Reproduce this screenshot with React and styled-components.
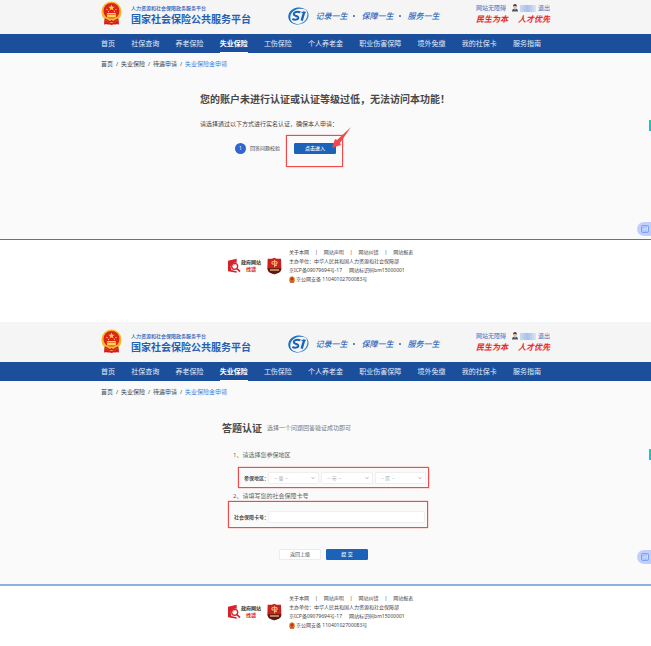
import React, { Fragment, useId } from 'react';
import styled, { createGlobalStyle } from 'styled-components';

const GlobalStyle = createGlobalStyle`
  * {
    box-sizing: border-box;
  }
  body {
    margin: 0;
    background: #fff;
    color: #444;
    font-family: 'Noto Sans', 'Noto Sans CJK SC', sans-serif;
    font-size: 6px;
    line-height: 8px;
  }
  h1, h2, p, ul, ol {
    margin: 0;
    padding: 0;
    list-style: none;
  }
  a {
    color: inherit;
    text-decoration: none;
  }
  button, input, select {
    font-family: inherit;
    margin: 0;
  }
  svg {
    display: block;
    flex: none;
  }
`;

const Screens = styled.div`
  display: flex;
  flex-direction: column;
  gap: 28px;
`;

const Screen = styled.section`
  position: relative;
  overflow: hidden;
`;

const Container = styled.div`
  width: 100%;
  max-width: ${props => props.$width || 449}px;
  margin: 0 auto;
`;

/* header */

const Header = styled.header`
  background: #f5f5f5;
  padding: ${props => (props.$cropped ? 0 : 6)}px 0 8px;
`;

const HeaderRow = styled(Container)`
  display: flex;
  justify-content: space-between;
  align-items: flex-end;
  height: 26px;
`;

const Brand = styled.a`
  display: flex;
  align-items: flex-end;
  gap: 9px;
  color: #2560b4;
`;

const BrandText = styled.div`
  white-space: nowrap;
`;

const BrandSub = styled.div`
  font-size: 5px;
  font-weight: 500;
  line-height: 8px;
`;

const BrandTitle = styled.div`
  font-size: 10px;
  font-weight: 700;
  line-height: 14px;
`;

const Slogan = styled.div`
  display: flex;
  align-items: center;
  gap: 5px;
  color: #2f65b5;
  font-size: 8px;
  font-style: italic;
  font-weight: 500;
  line-height: 20px;
  white-space: nowrap;
`;

const Dot = styled.i`
  width: 2px;
  height: 2px;
  margin: 0 1px;
  border-radius: 50%;
  background: #2f65b5;
`;

const Account = styled.div`
  color: #3a72c0;
  white-space: nowrap;
`;

const AccountRow = styled.div`
  display: flex;
  align-items: center;
  justify-content: space-between;
`;

const UserLinks = styled.div`
  display: flex;
  align-items: center;
  gap: 2px;
  margin-left: 6px;
`;

const MaskedName = styled.span`
  width: 16px;
  height: 7px;
  background: linear-gradient(90deg, #cbdaf1, #a9c1e8 45%, #bccfee 70%, #dbe5f5);
`;

const Motto = styled.div`
  display: flex;
  justify-content: space-between;
  color: #e5252b;
  font-size: 8px;
  font-style: italic;
  font-weight: 700;
  line-height: 14px;
`;

/* navigation */

const Nav = styled.nav`
  background: #1b4f9c;
`;

const NavList = styled.ul`
  display: flex;
  justify-content: space-between;
  padding-right: 9px;
  white-space: nowrap;
`;

const NavLink = styled.a`
  display: block;
  height: 19px;
  border-bottom: 1px solid ${props => (props.$active ? '#fff' : 'transparent')};
  color: ${props => (props.$active ? '#fff' : '#e3ecf8')};
  font-size: 7px;
  font-weight: ${props => (props.$active ? 700 : 400)};
  line-height: 19px;
`;

const Breadcrumb = styled.nav`
  display: flex;
  gap: 2px;
  padding-top: 7px;
`;

const Crumb = styled.a`
  color: ${props => (props.$current ? '#3f7fe0' : '#444')};
`;

const Slash = styled.span`
  width: 4px;
  text-align: center;
`;

/* body */

const Main = styled.main`
  background: #fafafa;
  padding-bottom: ${props => props.$bottom}px;
`;

const Title = styled.h1`
  color: #484848;
  font-size: 10px;
  font-weight: 700;
  line-height: 14px;
  white-space: nowrap;
`;

const Notice = styled(Container)`
  padding-top: 24px;
`;

const Hint = styled.p`
  margin-top: 14px;
  white-space: nowrap;
`;

const MethodRow = styled.div`
  display: flex;
  align-items: flex-start;
  margin: 7px 0 0 35px;
`;

const Method = styled.div`
  display: flex;
  align-items: center;
  gap: 4px;
  width: 51px;
  padding-top: 8px;
  font-size: 5px;
  line-height: 11px;
  white-space: nowrap;
`;

const Badge = styled.span`
  width: 11px;
  height: 11px;
  border-radius: 50%;
  background: #2f66d0;
  color: #fff;
  text-align: center;
`;

const Highlight = styled.div`
  position: relative;
  border: 1px solid #f4484a;
  box-shadow: 0 0 1px #f4484a;
`;

const ButtonHighlight = styled(Highlight)`
  padding: 7px 6px 12px 7px;
`;

const AreaHighlight = styled(Highlight)`
  display: flex;
  align-items: center;
  height: 21px;
  margin: 8px 0 0 16px;
  padding: 0 2px 0 5px;
`;

const CardHighlight = styled(Highlight)`
  display: flex;
  align-items: center;
  height: 27px;
  margin: 1px 1px 0 6px;
  padding: 4px 2px 0 5px;
`;

const Arrow = styled.svg`
  position: absolute;
  top: -9px;
  right: -9px;
`;

const Button = styled.button`
  display: block;
  width: 42px;
  height: 11px;
  padding: 0;
  border: 1px solid ${props => (props.$primary ? '#1a63b8' : '#ececec')};
  border-radius: 1px;
  background: ${props => (props.$primary ? '#1a63b8' : '#fff')};
  color: ${props => (props.$primary ? '#fff' : '#555')};
  font-size: 5px;
  font-weight: ${props => (props.$primary ? 500 : 400)};
  line-height: 9px;
  cursor: pointer;
`;

const Form = styled.form`
  display: flow-root;
`;

const FormHead = styled.div`
  display: flex;
  align-items: center;
  gap: 5px;
  padding-top: 25px;
  color: #777;
  white-space: nowrap;
`;

const Step = styled.h2`
  margin: ${props => props.$top}px 0 0 11px;
  color: #666;
  font-size: 6px;
  font-weight: 400;
  line-height: 8px;
`;

const Label = styled.label`
  flex: none;
  width: ${props => props.$width}px;
  color: #333;
  font-size: 5px;
  font-weight: 500;
  white-space: nowrap;
`;

const Selects = styled.div`
  display: flex;
  flex: 1;
  gap: 2px;
`;

const SelectBox = styled.div`
  position: relative;
  flex: 1;

  svg {
    position: absolute;
    top: 4px;
    right: 4px;
    pointer-events: none;
  }
`;

const Select = styled.select`
  display: block;
  width: 100%;
  height: 12px;
  padding: 0 5px;
  border: 1px solid #efefef;
  border-radius: 1px;
  background: #fff;
  color: #aaa;
  font-size: 5px;
  line-height: 10px;
  appearance: none;
`;

const Input = styled.input`
  flex: 1;
  min-width: 0;
  height: 12px;
  padding: 0 4px;
  border: 1px solid #efefef;
  border-radius: 1px;
  background: #fff;
  font-size: 5px;
`;

const Actions = styled.div`
  display: flex;
  justify-content: center;
  gap: 5px;
  margin-top: 21px;
  padding-right: 4px;
`;

/* footer */

const Footer = styled.footer`
  border-top: ${props => props.$line};
  padding: 8px 0 10px;
  font-size: 5px;
  line-height: 9px;
  white-space: nowrap;
`;

const FooterRow = styled(Container)`
  display: flex;
  align-items: center;
`;

const ErrorReport = styled.a`
  display: flex;
  align-items: center;
  width: 39px;
  color: #333;
  font-weight: 700;
  line-height: 7px;
  text-align: center;

  em {
    display: block;
    color: #d8222b;
    font-style: normal;
  }
`;

const FooterInfo = styled.div`
  margin-left: 7px;
`;

const FooterLine = styled.p`
  display: flex;
  align-items: center;
  gap: ${props => props.$gap || 0}px;
`;

/* floating tools at the window edge */

const SideTab = styled.div`
  position: absolute;
  right: 0;
  bottom: ${props => props.$bottom}px;
  width: 2px;
  height: 11px;
  background: linear-gradient(#16d29a, #12b9ea);
`;

const SideTool = styled.button`
  position: absolute;
  right: 0;
  bottom: ${props => props.$bottom}px;
  display: flex;
  align-items: center;
  width: 14px;
  height: 14px;
  padding: 0 0 0 4px;
  border: 0;
  border-radius: 7px 0 0 7px;
  background: #c3cffa;
`;

const navItems = [
  '首页',
  '社保查询',
  '养老保险',
  '失业保险',
  '工伤保险',
  '个人养老金',
  '职业伤害保障',
  '境外免缴',
  '我的社保卡',
  '服务指南',
];

const crumbs = ['首页', '失业保险', '待遇申请', '失业保险金申领'];

const footerLinks = ['关于本网', '网站声明', '网站纠错', '网站报表'];

const Emblem = () => (
  <svg width="21" height="25" viewBox="0 0 42 50">
    <path d="M7 34h28l1 13-7-1-8 2-8-2-7 1z" fill="#d81e1e" />
    <ellipse cx="21" cy="22" rx="20" ry="21" fill="#f3b52c" />
    <circle cx="21" cy="20" r="16" fill="#dd2018" />
    <path d="m21 7 1.700 4.600h4.800l-3.900 2.900 1.500 4.600-4.100-2.800-4.100 2.800 1.500-4.600-3.900-2.900h4.800z" fill="#fbd545" />
    <g fill="#fbd545">
      <circle cx="12" cy="17" r="1.300" />
      <circle cx="15" cy="21" r="1.300" />
      <circle cx="27" cy="21" r="1.300" />
      <circle cx="30" cy="17" r="1.300" />
      <path d="M11 27h20l-2-3H13zM12 28h18v4H12zM8 33h26v2H8z" />
    </g>
    <circle cx="21" cy="40" r="4" fill="#f8c53c" />
    <circle cx="21" cy="40" r="2" fill="#d81e1e" />
    <path d="m8 36 7 4-2 7M34 36l-7 4 2 7M15 41h12" fill="none" stroke="#d81e1e" strokeWidth="3" />
  </svg>
);

const SiLogo = () => (
  <svg width="23" height="20" viewBox="0 0 69 60" fill="none">
    <path d="M57 12C44-1 15 3 6 22-3 44 17 60 39 54 17 56 5 42 12 25 19 9 41 4 57 12z" fill="#1c6fc4" />
    <path d="M55 8c14 10 13 32-4 42-8 5-18 6-26 4 15 1 29-6 34-19 4-10 2-20-4-27z" fill="#2f8ad8" />
    <path d="M40 19c-9-4-20-1-20 5 0 7 15 5 14 12-1 6-12 6-18 3" stroke="#1a62b8" strokeWidth="6" />
    <path d="m52 17-8 27" stroke="#1a62b8" strokeWidth="7" />
    <path d="M43 19h14" stroke="#1a62b8" strokeWidth="3" />
  </svg>
);

const UserIcon = () => (
  <svg width="6" height="8" viewBox="0 0 12 16">
    <path d="M0 15q0-6 6-6t6 6z" fill="#5b5560" />
    <circle cx="6" cy="5" r="3.500" fill="#e5b3a0" />
    <path d="M2 5q0-5 4-5t4 5Q6 2 2 5z" fill="#3a2f35" />
    <path d="m4.500 9 1.500 3 1.500-3z" fill="#fff" />
  </svg>
);

const FindIcon = () => (
  <svg width="13" height="16" viewBox="0 0 39 48">
    <path d="M0 8 26 2v12h-8L8 24l2 12 16 4v4L0 40z" fill="#d8222b" />
    <circle cx="20" cy="25" r="9" fill="#fff" stroke="#d8222b" strokeWidth="4" />
    <path d="M15 24q1-5 6-5" fill="none" stroke="#e8777c" strokeWidth="2" />
    <path d="m27 32 9 9" stroke="#d8222b" strokeWidth="5" />
  </svg>
);

const ShieldIcon = () => (
  <svg width="15" height="18" viewBox="0 0 45 54">
    <path d="M22 2q10 5 20 3l1 30q-1 10-8 12l-13 5-13-5q-7-2-8-12L2 5q10 2 20-3z" fill="#c9211f" />
    <path d="M2 34h41q0 10-8 13l-13 5-13-5q-7-3-7-13z" fill="#5a1b16" />
    <path d="M23 8v23M15 14h15v7H15zM23 25h7" fill="none" stroke="#f3c079" strokeWidth="3" />
    <path d="M9 39h27" stroke="#e8b978" strokeWidth="4" />
  </svg>
);

const PoliceBadge = () => (
  <svg width="6" height="7" viewBox="0 0 12 14">
    <path d="m6 0 5 3 1 6-2 4H2L0 9l1-6z" fill="#d9952c" />
    <circle cx="6" cy="6" r="3.500" fill="#cf2a1d" />
    <path d="M2 11h8v2H2z" fill="#b5221b" />
  </svg>
);

const PageHeader = ({ cropped }) => (
  <Fragment>
    <Header $cropped={cropped}>
      <HeaderRow>
        <Brand href="#home">
          <Emblem />
          <BrandText>
            <BrandSub>人力资源和社会保障政务服务平台</BrandSub>
            <BrandTitle>国家社会保险公共服务平台</BrandTitle>
          </BrandText>
        </Brand>
        <Slogan>
          <SiLogo />
          <span>记录一生</span>
          <Dot />
          <span>保障一生</span>
          <Dot />
          <span>服务一生</span>
        </Slogan>
        <Account>
          <AccountRow>
            <a href="#access">网站无障碍</a>
            <UserLinks>
              <UserIcon />
              <MaskedName />
              <a href="#logout">退出</a>
            </UserLinks>
          </AccountRow>
          <Motto>
            <span>民生为本</span>
            <span>人才优先</span>
          </Motto>
        </Account>
      </HeaderRow>
    </Header>
    <Nav>
      <Container>
        <NavList>
          {navItems.map(item => (
            <li key={item}>
              <NavLink href="#nav" $active={item === '失业保险'}>{item}</NavLink>
            </li>
          ))}
        </NavList>
      </Container>
    </Nav>
  </Fragment>
);

const Crumbs = () => (
  <Container>
    <Breadcrumb>
      {crumbs.map((item, i) => (
        <Fragment key={item}>
          {i > 0 && <Slash>/</Slash>}
          <Crumb href="#crumb" $current={i === crumbs.length - 1}>{item}</Crumb>
        </Fragment>
      ))}
    </Breadcrumb>
  </Container>
);

const PageFooter = ({ line }) => (
  <Footer $line={line}>
    <FooterRow $width={195}>
      <ErrorReport href="#report">
        <FindIcon />
        <span>
          政府网站
          <em>找错</em>
        </span>
      </ErrorReport>
      <ShieldIcon />
      <FooterInfo>
        <FooterLine $gap={6}>
          {footerLinks.map((item, i) => (
            <Fragment key={item}>
              {i > 0 && <span>|</span>}
              <a href="#footer">{item}</a>
            </Fragment>
          ))}
        </FooterLine>
        <FooterLine>主办单位：中华人民共和国人力资源和社会保障部</FooterLine>
        <FooterLine $gap={7}>
          <span>京ICP备09079694号-17</span>
          <span>网站标识码bm15000001</span>
        </FooterLine>
        <FooterLine $gap={1}>
          <PoliceBadge />
          <span>京公网安备 11040102700083号</span>
        </FooterLine>
      </FooterInfo>
    </FooterRow>
  </Footer>
);

const SideTools = ({ tab, tool }) => (
  <Fragment>
    <SideTab $bottom={tab} />
    <SideTool type="button" aria-label="工具" $bottom={tool}>
      <svg width="8" height="8" viewBox="0 0 16 16">
        <rect x="1" y="1" width="14" height="14" rx="2" fill="#a9c4fb" stroke="#7ba2f4" strokeWidth="2" />
        <path d="M4 11V8M7 11V6M10 11V5M13 11V4" stroke="#dfe9ff" strokeWidth="1.500" />
      </svg>
    </SideTool>
  </Fragment>
);

const AreaSelect = ({ text, ...rest }) => (
  <SelectBox>
    <Select {...rest}>
      <option>{text}</option>
    </Select>
    <svg width="4" height="4" viewBox="0 0 8 8">
      <path d="m1 2 3 4 3-4" fill="none" stroke="#b5b5b5" strokeWidth="1.500" />
    </svg>
  </SelectBox>
);

const NoticeScreen = () => (
  <Screen>
    <PageHeader cropped />
    <Main $bottom={72}>
      <Crumbs />
      <Notice $width={251}>
        <Title>您的账户未进行认证或认证等级过低，无法访问本功能！</Title>
        <Hint>请选择通过以下方式进行实名认证，确保本人申请：</Hint>
        <MethodRow>
          <Method>
            <Badge>1</Badge>
            <span>回答问题校验</span>
          </Method>
          <ButtonHighlight>
            <Button type="button" $primary>点击进入</Button>
            <Arrow width="20" height="22" viewBox="0 0 20 22">
              <path d="M20 0 9 16l1 2-9 3 3-9 2 1z" fill="#f4484a" />
            </Arrow>
          </ButtonHighlight>
        </MethodRow>
      </Notice>
    </Main>
    <PageFooter line="1px solid #3f7ac8" />
    <SideTools tab={163} tool={58} />
  </Screen>
);

const QuestionScreen = () => {
  const id = useId();

  return (
    <Screen>
      <PageHeader />
      <Main $bottom={24}>
        <Crumbs />
        <Container $width={207}>
          <Form onSubmit={e => e.preventDefault()}>
            <FormHead>
              <Title>答题认证</Title>
              <span>选择一个问题回答验证成功即可</span>
            </FormHead>
            <Step $top={16}>1、请选择您参保地区</Step>
            <AreaHighlight>
              <Label htmlFor={`${id}-area`} $width={24}>参保地区：</Label>
              <Selects>
                <AreaSelect id={`${id}-area`} text="-- 省 --" />
                <AreaSelect aria-label="市" text="-- 市 --" />
                <AreaSelect aria-label="区" text="-- 区 --" />
              </Selects>
            </AreaHighlight>
            <Step $top={4}>2、请填写您的社会保障卡号</Step>
            <CardHighlight>
              <Label htmlFor={`${id}-card`} $width={34}>社会保障卡号：</Label>
              <Input id={`${id}-card`} type="text" />
            </CardHighlight>
            <Actions>
              <Button type="button">返回上级</Button>
              <Button type="submit" $primary>提 交</Button>
            </Actions>
          </Form>
        </Container>
      </Main>
      <PageFooter line="2px solid #8fafe0" />
      <SideTools tab={180} tool={76} />
    </Screen>
  );
};

const App = () => (
  <Fragment>
    <GlobalStyle />
    <Screens>
      <NoticeScreen />
      <QuestionScreen />
    </Screens>
  </Fragment>
);

export default App;
